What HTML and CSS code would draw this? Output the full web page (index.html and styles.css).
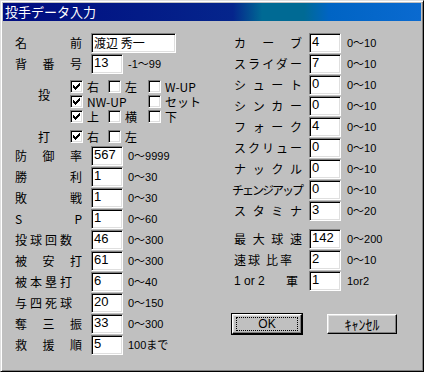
FILE: index.html
```html
<!DOCTYPE html>
<html lang="ja">
<head>
    <meta charset="UTF-8">
    <title>投手データ入力</title>
    <link rel="stylesheet" href="styles.css">
</head>
<body>

    <div class="window">
        <div class="titlebar">投手データ入力</div>

        <div class="dialog">
            <!-- 左側 -->
            <div class="col-left">
                <div class="row"><span class="lbl">名前</span><div class="field wide">渡辺 秀一</div></div>
                <div class="row"><span class="lbl">背番号</span><div class="field">13</div><span class="range">-1〜99</span></div>

                <div class="checks throw">
                    <span class="chk-head">投</span>
                    <div class="chk-grid">
                        <span class="cb"><span class="box"><svg viewBox="0 0 9 9" shape-rendering="crispEdges"><path d="M1 3h1v1h1v1h1v-1h1v-1h1v-1h1v-1h1v3h-1v1h-1v1h-1v1h-1v1h-1v-1h-1v-1h-1z"/></svg></span>右</span>
                        <span class="cb"><span class="box"></span>左</span>
                        <span class="cb"><span class="box"></span>W-UP</span>
                        <span class="cb span2"><span class="box"><svg viewBox="0 0 9 9" shape-rendering="crispEdges"><path d="M1 3h1v1h1v1h1v-1h1v-1h1v-1h1v-1h1v3h-1v1h-1v1h-1v1h-1v1h-1v-1h-1v-1h-1z"/></svg></span>NW-UP</span>
                        <span class="cb"><span class="box"></span>セット</span>
                        <span class="cb"><span class="box"><svg viewBox="0 0 9 9" shape-rendering="crispEdges"><path d="M1 3h1v1h1v1h1v-1h1v-1h1v-1h1v-1h1v3h-1v1h-1v1h-1v1h-1v1h-1v-1h-1v-1h-1z"/></svg></span>上</span>
                        <span class="cb"><span class="box"></span>横</span>
                        <span class="cb"><span class="box"></span>下</span>
                    </div>
                </div>

                <div class="checks bat">
                    <span class="chk-head">打</span>
                    <div class="chk-grid">
                        <span class="cb"><span class="box"><svg viewBox="0 0 9 9" shape-rendering="crispEdges"><path d="M1 3h1v1h1v1h1v-1h1v-1h1v-1h1v-1h1v3h-1v1h-1v1h-1v1h-1v1h-1v-1h-1v-1h-1z"/></svg></span>右</span>
                        <span class="cb"><span class="box"></span>左</span>
                    </div>
                </div>

                <div class="row first-stat"><span class="lbl">防御率</span><div class="field">567</div><span class="range">0〜9999</span></div>
                <div class="row"><span class="lbl">勝利</span><div class="field">1</div><span class="range">0〜30</span></div>
                <div class="row"><span class="lbl">敗戦</span><div class="field">1</div><span class="range">0〜30</span></div>
                <div class="row"><span class="lbl">S P</span><div class="field">1</div><span class="range">0〜60</span></div>
                <div class="row"><span class="lbl spaced">投球回数</span><div class="field">46</div><span class="range">0〜300</span></div>
                <div class="row"><span class="lbl">被安打</span><div class="field">61</div><span class="range">0〜300</span></div>
                <div class="row"><span class="lbl spaced">被本塁打</span><div class="field">6</div><span class="range">0〜40</span></div>
                <div class="row"><span class="lbl spaced">与四死球</span><div class="field">20</div><span class="range">0〜150</span></div>
                <div class="row"><span class="lbl">奪三振</span><div class="field">33</div><span class="range">0〜300</span></div>
                <div class="row"><span class="lbl">救援順</span><div class="field">5</div><span class="range">100まで</span></div>
            </div>

            <!-- 右側 -->
            <div class="col-right">
                <div class="row"><span class="lbl">カーブ</span><div class="field">4</div><span class="range">0〜10</span></div>
                <div class="row"><span class="lbl">スライダー</span><div class="field">7</div><span class="range">0〜10</span></div>
                <div class="row"><span class="lbl">シュート</span><div class="field">0</div><span class="range">0〜10</span></div>
                <div class="row"><span class="lbl">シンカー</span><div class="field">0</div><span class="range">0〜10</span></div>
                <div class="row"><span class="lbl">フォーク</span><div class="field">4</div><span class="range">0〜10</span></div>
                <div class="row"><span class="lbl">スクリュー</span><div class="field">0</div><span class="range">0〜10</span></div>
                <div class="row"><span class="lbl">ナックル</span><div class="field">0</div><span class="range">0〜10</span></div>
                <div class="row"><span class="lbl narrow">チェンジアップ</span><div class="field">0</div><span class="range">0〜10</span></div>
                <div class="row"><span class="lbl">スタミナ</span><div class="field">3</div><span class="range">0〜20</span></div>

                <div class="row speed"><span class="lbl">最大球速</span><div class="field">142</div><span class="range">0〜200</span></div>
                <div class="row"><span class="lbl free">速球<span class="sp">比率</span></span><div class="field">2</div><span class="range">0〜10</span></div>
                <div class="row"><span class="lbl split"><span class="latin">1 or 2</span><span>軍</span></span><div class="field">1</div><span class="range">1or2</span></div>

                <div class="buttons">
                    <button class="btn default"><span class="focus">OK</span></button>
                    <button class="btn cancel">ｷｬﾝｾﾙ</button>
                </div>
            </div>
        </div>
    </div>

</body>
</html>
```

FILE: styles.css
```css
/* Reset */
* {
    margin: 0;
    padding: 0;
    box-sizing: border-box;
}

body {
    width: 424px;
    height: 372px;
    overflow: hidden;
    background: #c0c0c0;
    color: #000;
    font-family: "Noto Sans CJK JP", sans-serif;
    font-size: 12px;
}

/* Ventana */
.window {
    width: 424px;
    height: 372px;
    padding: 2px;
    background: #c0c0c0;
    border: 1px solid;
    border-color: #dfdfdf #000 #000 #dfdfdf;
    box-shadow: inset 1px 1px #fff, inset -1px -1px #808080;
}

.titlebar {
    height: 18px;
    line-height: 18px;
    padding-left: 2px;
    color: #fff;
    font-size: 13px;
    background: linear-gradient(to right, #000c80 0%, #05258c 55%, #006a94 62%, #006a94 72%, #0064c4 78%, #0a6ad0 100%);
}

.dialog {
    display: flex;
    padding: 12px 0 0 12px;
}

.col-left {
    width: 219px;
}

.row {
    display: flex;
    align-items: center;
    height: 20px;
    margin-bottom: 1px;
}

.lbl {
    width: 67px;
    margin-right: 9px;
    line-height: 20px;
    text-align: justify;
    text-align-last: justify;
}

.lbl.spaced {
    text-align-last: left;
    letter-spacing: 3px;
}

/* Campos de texto */
.field {
    width: 32px;
    height: 20px;
    padding: 1px 2px 0;
    background: #fff;
    border: 1px solid;
    border-color: #808080 #fff #fff #808080;
    box-shadow: inset 1px 1px #000, inset -1px -1px #dfdfdf;
    font-family: "Liberation Sans", "Noto Sans CJK JP", sans-serif;
    font-size: 13px;
    line-height: 14px;
    white-space: nowrap;
}

.field.wide {
    width: 85px;
    font-family: "Noto Sans CJK JP", sans-serif;
    font-size: 12px;
    line-height: 15px;
}

.range {
    margin-left: 5px;
    font-family: "Liberation Sans", "Noto Sans CJK JP", sans-serif;
    font-size: 11px;
    line-height: 14px;
    white-space: nowrap;
}

/* Casillas */
.checks {
    display: flex;
    margin-top: 5px;
}

.chk-head {
    width: 55px;
    padding-left: 23px;
    line-height: 15px;
}

.throw .chk-head {
    margin-top: 8px;
}

.chk-grid {
    display: grid;
    grid-template-columns: 38px 40px auto;
    grid-auto-rows: 15px;
    align-items: center;
}

.cb {
    display: flex;
    align-items: center;
    gap: 4px;
    height: 15px;
    line-height: 15px;
    white-space: nowrap;
}

.cb.span2 {
    grid-column: span 2;
}

.box {
    width: 13px;
    height: 13px;
    padding: 1px;
    background: #fff;
    border: 1px solid;
    border-color: #808080 #fff #fff #808080;
    box-shadow: inset 1px 1px #000, inset -1px -1px #dfdfdf;
}

.box svg {
    display: block;
    width: 9px;
    height: 9px;
}

.first-stat {
    margin-top: 2px;
}

/* Columna derecha */
.col-right .lbl {
    width: 68px;
    margin-right: 7px;
}

.col-right .range {
    margin-left: 6px;
}

.col-right .lbl.narrow {
    width: 70px;
    margin-left: -2px;
    margin-right: 7px;
    letter-spacing: -2px;
    text-align-last: left;
    white-space: nowrap;
}

.lbl.free {
    text-align-last: left;
    letter-spacing: 2px;
}

.lbl.free .sp {
    margin-left: 4px;
}

.lbl.split {
    display: flex;
    justify-content: space-between;
    padding-right: 4px;
}

.lbl .latin {
    font-family: "Liberation Sans", sans-serif;
}

.row.speed {
    margin-top: 8px;
}

/* Botones */
.buttons {
    display: flex;
    gap: 25px;
    margin-top: 23px;
    margin-left: -2px;
}

.btn {
    display: flex;
    align-items: center;
    justify-content: center;
    width: 70px;
    height: 20px;
    padding: 2px 3px;
    background: #c0c0c0;
    color: #000;
    border: 1px solid;
    border-color: #fff #000 #000 #fff;
    box-shadow: inset -1px -1px #808080, inset 1px 1px #dfdfdf;
    font-family: "Noto Sans CJK JP", sans-serif;
    font-size: 12px;
    line-height: 14px;
}

.btn.cancel {
    font-size: 14px;
}

.btn.default {
    outline: 1px solid #000;
}

.btn .focus {
    display: flex;
    align-items: center;
    justify-content: center;
    width: 100%;
    height: 100%;
    border: 1px dotted #000;
    font-family: "Liberation Sans", sans-serif;
}
```
